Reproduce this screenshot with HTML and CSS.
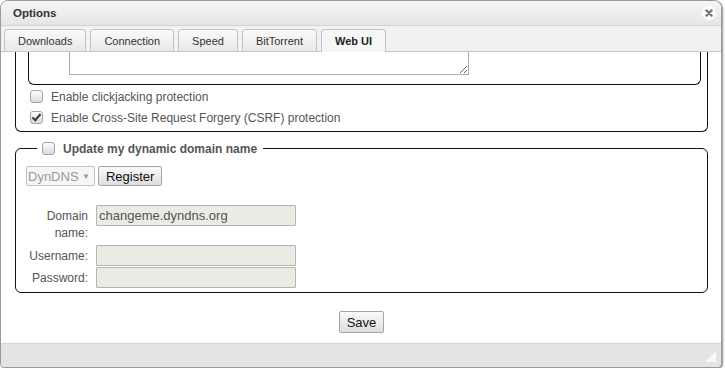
FILE: index.html
```html
<!DOCTYPE html>
<html lang="en">
<head>
  <meta charset="UTF-8" />
  <title>Options</title>
  <link rel="stylesheet" href="styles.css">
</head>
<body>
  <div class="window">
    <div class="titlebar">
      <span class="title">Options</span>
      <span class="close">
        <svg width="14" height="14" viewBox="0 0 14 14">
          <circle cx="7" cy="7" r="7" fill="#fff"/>
          <path d="M4.3 4.3 L9.7 9.7 M9.7 4.3 L4.3 9.7" stroke="#6e6e6e" stroke-width="2.2" stroke-linecap="round"/>
        </svg>
      </span>
    </div>

    <div class="tabs">
      <span class="tab">Downloads</span>
      <span class="tab">Connection</span>
      <span class="tab">Speed</span>
      <span class="tab">BitTorrent</span>
      <span class="tab active">Web UI</span>
    </div>

    <div class="panel">
      <!-- bloc du haut, deja defile -->
      <div class="group cut">
        <div class="group inner cut">
          <textarea class="headers"></textarea>
        </div>
        <label class="check"><input type="checkbox" class="cb"> Enable clickjacking protection</label>
        <label class="check"><input type="checkbox" class="cb" checked> Enable Cross-Site Request Forgery (CSRF) protection</label>
      </div>

      <fieldset class="group ddns">
        <legend><input type="checkbox" class="cb"> Update my dynamic domain name</legend>
        <div class="ddns-row">
          <span class="select">
            <select disabled><option>DynDNS</option></select>
            <span class="caret">&#9660;</span>
          </span>
          <button class="btn">Register</button>
        </div>
        <div class="form-grid">
          <label class="field-label two-line">Domain name:</label>
          <input class="field" type="text" value="changeme.dyndns.org" disabled>
          <label class="field-label">Username:</label>
          <input class="field" type="text" disabled>
          <label class="field-label">Password:</label>
          <input class="field" type="password" disabled>
        </div>
      </fieldset>

      <div class="actions">
        <button class="btn save">Save</button>
      </div>
    </div>

    <div class="footer"><span class="grip"></span></div>
  </div>
</body>
</html>
```

FILE: styles.css
```css
body {
  margin: 0;
  background: #fff;
  font-family: "Liberation Sans", Arial, sans-serif;
  font-size: 12px;
  color: #555;
}
/* Fenetre */
.window {
  width: 722px;
  height: 368px;
  box-sizing: border-box;
  border: 1px solid #9a9a9a;
  border-radius: 8px 8px 5px 5px;
  box-shadow: 1px 1px 2px rgba(0, 0, 0, 0.45);
  display: flex;
  flex-direction: column;
  overflow: hidden;
  background: #fff;
}
.titlebar {
  flex: none;
  height: 24px;
  display: flex;
  align-items: center;
  justify-content: space-between;
  padding: 0 5px 0 12px;
  background: linear-gradient(#f5f5f5, #e6e6e6);
  border-bottom: 1px solid #d2d2d2;
}
.title {
  font-weight: bold;
  font-size: 11.5px;
  color: #333;
}
.close {
  display: flex;
}
/* Onglets */
.tabs {
  flex: none;
  height: 25px;
  display: flex;
  align-items: flex-end;
  gap: 4px;
  padding-left: 3px;
  background: #f1f1f1;
  border-bottom: 1px solid #c6c6c6;
}
.tab {
  height: 21px;
  line-height: 22px;
  padding: 0 13px;
  border: 1px solid #c4c4c4;
  border-bottom: none;
  border-radius: 4px 4px 0 0;
  background: linear-gradient(#f9f9f9, #e9e9e9);
  font-size: 11px;
  color: #333;
}
.tab.active {
  font-weight: bold;
  color: #222;
  background: #f6f6f6;
  height: 22px;
  margin-bottom: -1px;
}
/* Contenu */
.panel {
  flex: 1;
  overflow: hidden;
  padding: 0 13px 0 14px;
  background: #fff;
}
.group {
  border: 1px solid #111;
  border-radius: 6px;
}
.group.cut {
  border-top: none;
  border-radius: 0 0 6px 6px;
  padding: 0 0 3px 14px;
}
.group.inner {
  margin: 0 6px 1px -2px;
  padding: 0 0 9px 40px;
}
.headers {
  display: block;
  width: 400px;
  height: 23px;
  box-sizing: border-box;
  margin: 0;
  border: 1px solid #aaa;
  border-top: none;
  background: #fff;
}
.check {
  display: flex;
  align-items: center;
  gap: 8px;
  height: 21px;
}
.cb {
  appearance: none;
  -webkit-appearance: none;
  width: 13px;
  height: 13px;
  margin: 0;
  border: 1px solid #a5a5a5;
  border-radius: 3px;
  background: linear-gradient(#fdfdfd, #dadada);
  position: relative;
  flex: none;
}
.cb:checked::after {
  content: "";
  position: absolute;
  left: 3px;
  top: 0;
  width: 3px;
  height: 7px;
  border: solid #3a3a3a;
  border-width: 0 2px 2px 0;
  transform: rotate(40deg);
}
/* DNS dynamique */
.ddns {
  margin: 8px 0 0;
  padding: 9px 10px 4px;
  min-width: 0;
}
.ddns legend {
  display: flex;
  align-items: center;
  gap: 8px;
  height: 17px;
  margin-left: 11px;
  padding: 0 6px 0 5px;
  font-weight: bold;
  color: #555;
}
.ddns-row {
  display: flex;
  gap: 3px;
  margin-bottom: 19px;
}
.select {
  display: inline-flex;
  align-items: center;
  height: 20px;
  box-sizing: border-box;
  border: 1px solid #c2c2c2;
  border-radius: 2px;
  background: #f6f6f6;
  padding: 0 4px 0 1px;
}
.select select {
  appearance: none;
  -webkit-appearance: none;
  border: none;
  background: transparent;
  padding: 0;
  margin: 0;
  font-family: inherit;
  font-size: 13px;
  color: #9a9a9a;
  opacity: 1;
}
.caret {
  font-size: 8px;
  color: #999;
  margin-left: 3px;
}
.btn {
  height: 20px;
  padding: 0 7px;
  border: 1px solid #a6a6a6;
  border-radius: 2px;
  background: linear-gradient(#fbfbfb, #dddddd);
  font-family: inherit;
  font-size: 13px;
  color: #111;
}
.form-grid {
  display: grid;
  grid-template-columns: 60px 200px;
  column-gap: 8px;
  row-gap: 1px;
  align-items: baseline;
  margin-left: 2px;
}
.field-label {
  text-align: right;
  line-height: 17px;
  color: #555;
}
.field-label.two-line {
  padding-bottom: 2px;
}
.field {
  height: 21px;
  box-sizing: border-box;
  margin: 0;
  padding: 0 2px;
  border: 1px solid #b4b4b4;
  border-radius: 1px;
  background: #ebebe4;
  font-family: inherit;
  font-size: 13px;
  color: #555;
}
.actions {
  display: flex;
  justify-content: center;
  margin-top: 18px;
}
.save {
  height: 22px;
}
/* Pied */
.footer {
  flex: none;
  display: flex;
  justify-content: flex-end;
  align-items: flex-end;
  padding: 0 5px 5px 0;
  height: 18px;
  background: #e4e4e4;
  border-top: 1px solid #d4d4d4;
}
.grip {
  width: 0;
  height: 0;
  border-left: 11px solid transparent;
  border-bottom: 11px solid #f7f7f7;
}
```
